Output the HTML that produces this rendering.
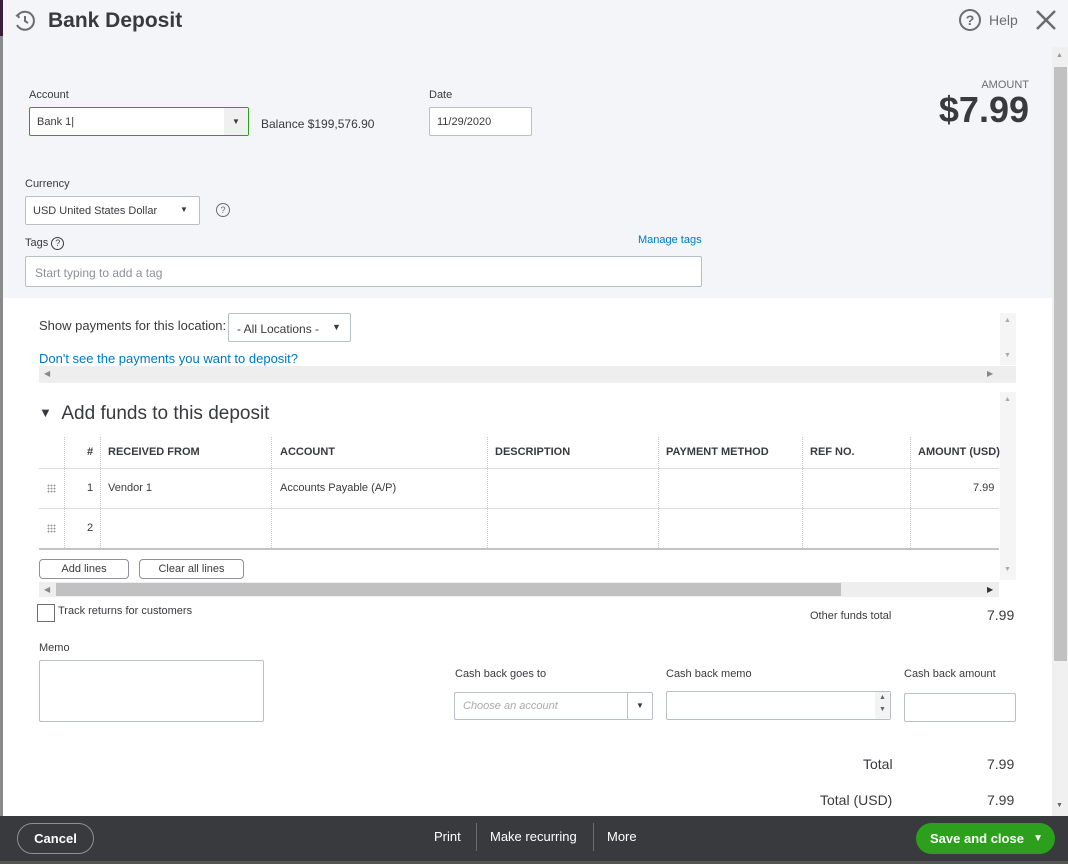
<!DOCTYPE html>
<html><head><style>
*{box-sizing:border-box;margin:0;padding:0}
body{width:1068px;height:864px;overflow:hidden;background:#fff;font-family:"Liberation Sans",sans-serif;color:#393a3d;position:relative}
.a{position:absolute}
.lbl{font-size:11px;color:#393a3d}
.inp{position:absolute;background:#fff;border:1px solid #babec5;border-radius:2px;font-size:11px}
.th{position:absolute;top:446px;font-size:11px;font-weight:bold;color:#393a3d}
.vl{position:absolute;border-left:1px dotted #c8c8c8}
.btn{position:absolute;border:1px solid #8d9096;border-radius:4px;background:#fff;font-size:11px;text-align:center;line-height:18px;height:20px}
.dots{position:absolute;width:9px;height:9px;background-image:radial-gradient(circle,#999 0.8px,transparent 1px);background-size:3px 3px}
</style></head><body>
<div class="a" style="left:0;top:0;width:1068px;height:298px;background:#f4f5f8"></div>
<div class="a" style="left:0;top:0;width:3px;height:864px;background:#8a8a8a"></div>
<div class="a" style="left:0;top:0;width:3px;height:36px;background:#3a1f3a"></div>
<!-- header -->
<svg class="a" style="left:13px;top:9px" width="24" height="24" viewBox="0 0 24 24" fill="none" stroke="#6b6c72" stroke-width="2"><path d="M5 6 A9 9 0 1 1 4 16" /><path d="M3 7 L5 6 L6 9" /><path d="M12 7 V12 L15 14"/></svg>
<div class="a" style="left:48px;top:9px;font-size:21px;font-weight:bold;color:#393a3d">Bank Deposit</div>
<div class="a" style="left:959px;top:9px;width:22px;height:22px;border:2px solid #6b6c72;border-radius:50%;font-size:14px;font-weight:bold;text-align:center;line-height:18px;color:#6b6c72">?</div>
<div class="a" style="left:989px;top:12px;font-size:14px;color:#6b6c72">Help</div>
<svg class="a" style="left:1035px;top:9px" width="22" height="22" viewBox="0 0 22 22" stroke="#6b6c72" stroke-width="2.5"><path d="M2 2 L20 20 M20 2 L2 20"/></svg>
<!-- right scrollbar -->
<div class="a" style="left:1052px;top:47px;width:16px;height:770px;background:#f0f0f0"></div>
<div class="a" style="left:1054px;top:67px;width:13px;height:594px;background:#c1c1c1"></div>
<div class="a" style="left:1056px;top:52px;font-size:7px;color:#999">▲</div>
<div class="a" style="left:1056px;top:802px;font-size:7px;color:#666">▼</div>
<!-- top form -->
<div class="a lbl" style="left:29px;top:89px">Account</div>
<div class="inp" style="left:29px;top:107px;width:220px;height:29px;border:1px solid #2ca01c"><span class="a" style="left:7px;top:8px">Bank 1|</span><div class="a" style="right:0;top:0;width:24px;height:27px;background:#f0f0f0;font-size:8px;text-align:center;line-height:27px">▼</div></div>
<div class="a lbl" style="left:261px;top:117px;font-size:12px">Balance <span style="font-size:12px">$199,576.90</span></div>
<div class="a lbl" style="left:429px;top:89px">Date</div>
<div class="inp" style="left:429px;top:107px;width:103px;height:29px"><span class="a" style="left:7px;top:8px">11/29/2020</span></div>
<div class="a" style="right:39px;top:79px;font-size:11px;color:#6b6c72">AMOUNT</div>
<div class="a" style="right:39px;top:89px;font-size:36px;font-weight:bold;color:#393a3d">$7.99</div>
<div class="a lbl" style="left:25px;top:178px">Currency</div>
<div class="inp" style="left:25px;top:196px;width:175px;height:29px"><span class="a" style="left:7px;top:8px">USD United States Dollar</span><span class="a" style="left:154px;top:8px;font-size:8px">▼</span></div>
<div class="a" style="left:216px;top:203px;width:14px;height:14px;border:1px solid #6b6c72;border-radius:50%;font-size:9px;text-align:center;line-height:12px;color:#6b6c72">?</div>
<div class="a lbl" style="left:25px;top:237px">Tags <span style="display:inline-block;width:13px;height:13px;border:1px solid #393a3d;border-radius:50%;font-size:9px;text-align:center;line-height:11px">?</span></div>
<div class="a" style="left:638px;top:234px;font-size:11px;color:#0077c5">Manage tags</div>
<div class="inp" style="left:25px;top:256px;width:677px;height:31px"><span class="a" style="left:9px;top:9px;color:#8d9096;font-size:12px">Start typing to add a tag</span></div>
<!-- payments -->
<div class="a" style="left:39px;top:318px;font-size:13px">Show payments for this location:</div>
<div class="inp" style="left:228px;top:313px;width:123px;height:29px"><span class="a" style="left:8px;top:8px;font-size:12px">- All Locations -</span><span class="a" style="left:103px;top:8px;font-size:9px">▼</span></div>
<div class="a" style="left:39px;top:351px;font-size:13px;color:#0077c5">Don't see the payments you want to deposit?</div>
<div class="a" style="left:39px;top:366px;width:977px;height:17px;background:#eeeeee"></div>
<div class="a" style="left:44px;top:369px;font-size:8px;color:#888">◀</div>
<div class="a" style="left:987px;top:369px;font-size:8px;color:#888">▶</div>
<div class="a" style="left:1000px;top:313px;width:16px;height:52px;background:#f5f5f5"></div>
<div class="a" style="left:1004px;top:317px;font-size:7px;color:#aaa">▲</div>
<div class="a" style="left:1004px;top:352px;font-size:7px;color:#aaa">▼</div>
<!-- funds -->
<div class="a" style="left:39px;top:403px;font-size:19px"><span style="font-size:13px;position:relative;top:-2px">▼</span>&nbsp; Add funds to this deposit</div>
<div class="a" style="left:1000px;top:392px;width:16px;height:188px;background:#f5f5f5"></div>
<div class="a" style="left:1004px;top:396px;font-size:7px;color:#aaa">▲</div>
<div class="a" style="left:1004px;top:566px;font-size:7px;color:#aaa">▼</div>
<div class="a" style="left:39px;top:468px;width:960px;border-top:1px solid #ddd"></div>
<div class="a" style="left:39px;top:508px;width:960px;border-top:1px solid #ddd"></div>
<div class="a" style="left:39px;top:548px;width:960px;border-top:2px solid #c4c4c4"></div>
<div class="vl" style="left:64px;top:437px;height:111px"></div>
<div class="vl" style="left:100px;top:437px;height:111px"></div>
<div class="vl" style="left:271px;top:437px;height:111px"></div>
<div class="vl" style="left:487px;top:437px;height:111px"></div>
<div class="vl" style="left:658px;top:437px;height:111px"></div>
<div class="vl" style="left:802px;top:437px;height:111px"></div>
<div class="vl" style="left:910px;top:437px;height:111px"></div>
<div class="th" style="left:87px">#</div>
<div class="th" style="left:108px">RECEIVED FROM</div>
<div class="th" style="left:280px">ACCOUNT</div>
<div class="th" style="left:495px">DESCRIPTION</div>
<div class="th" style="left:666px">PAYMENT METHOD</div>
<div class="th" style="left:810px">REF NO.</div>
<div class="th" style="left:918px">AMOUNT (USD)</div>
<div class="dots" style="left:47px;top:484px"></div>
<div class="dots" style="left:47px;top:524px"></div>
<div class="a" style="left:87px;top:482px;font-size:11px">1</div>
<div class="a" style="left:108px;top:482px;font-size:11px">Vendor 1</div>
<div class="a" style="left:280px;top:482px;font-size:11px">Accounts Payable (A/P)</div>
<div class="a" style="left:973px;top:482px;font-size:11px">7.99</div>
<div class="a" style="left:87px;top:522px;font-size:11px">2</div>
<div class="btn" style="left:39px;top:559px;width:90px">Add lines</div>
<div class="btn" style="left:139px;top:559px;width:105px">Clear all lines</div>
<div class="a" style="left:39px;top:582px;width:960px;height:15px;background:#eee"></div>
<div class="a" style="left:56px;top:583px;width:785px;height:13px;background:#c1c1c1"></div>
<div class="a" style="left:44px;top:585px;font-size:8px;color:#888">◀</div>
<div class="a" style="left:987px;top:585px;font-size:8px;color:#333">▶</div>
<div class="a" style="left:37px;top:604px;width:18px;height:18px;border:1px solid #6b6c72;background:#fff"></div>
<div class="a" style="left:58px;top:605px;font-size:11px">Track returns for customers</div>
<div class="a" style="left:810px;top:610px;font-size:11px">Other funds total</div>
<div class="a" style="left:987px;top:607px;font-size:14px">7.99</div>
<!-- memo -->
<div class="a lbl" style="left:39px;top:642px">Memo</div>
<div class="inp" style="left:39px;top:660px;width:225px;height:62px"></div>
<div class="a lbl" style="left:455px;top:668px">Cash back goes to</div>
<div class="inp" style="left:454px;top:692px;width:199px;height:28px"><span class="a" style="left:8px;top:7px;color:#aaa;font-style:italic">Choose an account</span><div class="a" style="left:172px;top:0;height:26px;border-left:1px solid #babec5;width:25px;text-align:center;line-height:26px;font-size:8px">▼</div></div>
<div class="a lbl" style="left:666px;top:668px">Cash back memo</div>
<div class="inp" style="left:666px;top:691px;width:225px;height:29px"><div class="a" style="right:0;top:0;width:15px;height:27px;background:#f3f3f3;font-size:7px;text-align:center;line-height:12px;color:#666">▲<br>▼</div></div>
<div class="a lbl" style="left:904px;top:668px">Cash back amount</div>
<div class="inp" style="left:904px;top:693px;width:112px;height:29px"></div>
<div class="a" style="left:863px;top:756px;font-size:14px">Total</div>
<div class="a" style="left:987px;top:756px;font-size:14px">7.99</div>
<div class="a" style="left:820px;top:792px;font-size:14px">Total (USD)</div>
<div class="a" style="left:987px;top:792px;font-size:14px">7.99</div>
<!-- footer -->
<div class="a" style="left:0;top:816px;width:1068px;height:45px;background:#393a3d"></div>
<div class="a" style="left:0;top:861px;width:1068px;height:3px;background:#555"></div>
<div class="a" style="left:17px;top:823px;width:77px;height:31px;border:1px solid #8d9096;border-radius:16px;color:#fff;font-size:13px;font-weight:bold;text-align:center;line-height:29px">Cancel</div>
<div class="a" style="left:434px;top:829px;color:#fff;font-size:13px">Print</div>
<div class="a" style="left:476px;top:823px;height:28px;border-left:1px solid #6b6c72"></div>
<div class="a" style="left:490px;top:829px;color:#fff;font-size:13px">Make recurring</div>
<div class="a" style="left:593px;top:823px;height:28px;border-left:1px solid #6b6c72"></div>
<div class="a" style="left:607px;top:829px;color:#fff;font-size:13px">More</div>
<div class="a" style="left:916px;top:823px;width:139px;height:31px;background:#2ca01c;border-radius:16px;color:#fff;font-size:13px;font-weight:bold;line-height:31px;padding-left:14px">Save and close<span style="position:absolute;right:12px;font-size:10px">▼</span></div>
</body></html>
